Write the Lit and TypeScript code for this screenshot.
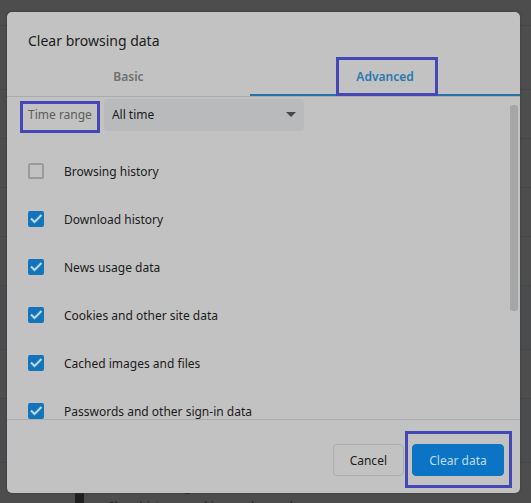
import { LitElement, html, css } from "lit";
import { customElement, state } from "lit/decorators.js";

interface DataItem {
  id: string;
  label: string;
  checked: boolean;
}

@customElement("app-root")
export class AppRoot extends LitElement {
  static styles = css`
    :host {
      display: block;
      position: relative;
      box-sizing: border-box;
      height: 100vh;
      min-height: 320px;
      padding: 12px 11px 10px 7px;
      overflow: hidden;
      background: #4d4d4d;
      color: #1c1c1c;
      font: 12px/20px "Noto Sans", "Open Sans", sans-serif;
    }
    * {
      box-sizing: border-box;
    }

    /* dimmed settings page under the dialog */
    .page {
      position: absolute;
      inset: 0;
      display: flex;
      flex-direction: column;
      background: #4d4d4d;
      overflow: hidden;
    }
    .line {
      flex: none;
      height: 49px;
      border-bottom: 1px solid #454647;
    }
    .line.short {
      height: 26px;
    }
    .line.tall {
      height: 64px;
    }
    .line.active {
      background: #4a4c4e;
    }
    .entry {
      position: absolute;
      left: 75px;
      bottom: -14px;
      display: flex;
      gap: 23px;
      color: #242424;
      font-size: 12px;
      line-height: 20px;
    }
    .entry-icon {
      width: 9px;
      background: #1f1f20;
    }
    .entry p {
      margin: 0;
    }

    .dialog {
      position: relative;
      display: flex;
      flex-direction: column;
      height: 100%;
      border-radius: 5px;
      background: #c2c2c2;
      box-shadow: 0 0 3px #3a3a3a;
    }
    h1 {
      margin: 0;
      padding: 17px 21px 0;
      font-size: 14px;
      font-weight: 400;
      line-height: 24px;
    }
    .tabs {
      display: grid;
      grid-template-columns: 9fr 10fr;
      height: 44px;
      border-bottom: 1px solid #a9abac;
    }
    .tab {
      display: flex;
      justify-content: center;
      align-items: flex-start;
      height: 43px;
      padding: 14px 0 0;
      border: 0;
      background: none;
      color: #6e7072;
      font: 600 12px/20px "Noto Sans", "Open Sans", sans-serif;
    }
    .tab.selected {
      border-bottom: 2px solid #2474a8;
      border-radius: 2px 0 0 0;
      color: #2878b0;
    }

    .marked {
      position: relative;
    }
    .marked::after {
      content: "";
      position: absolute;
      border: 3px solid #4547b5;
      pointer-events: none;
    }
    .tab .marked::after {
      inset: -10px -24px -9px -20px;
    }
    .range .marked::after {
      inset: -4px -8px -8px -8px;
    }
    .confirm.marked::after {
      inset: -14px -9px -13px -8px;
    }

    .body {
      position: relative;
      flex: 1;
      min-height: 0;
      padding: 2px 21px 0;
      overflow: hidden;
    }
    .range {
      display: flex;
      align-items: center;
      gap: 12px;
      margin-bottom: 16px;
    }
    .range label {
      color: #5c5d5e;
    }
    .select {
      position: relative;
      width: 200px;
    }
    select {
      appearance: none;
      display: block;
      width: 100%;
      height: 32px;
      padding: 0 8px;
      border: 0;
      border-radius: 4px;
      background: #b8babc;
      color: #1c1c1c;
      font: inherit;
    }
    .arrow {
      position: absolute;
      top: 13px;
      right: 8px;
      width: 10px;
      height: 5px;
      fill: #444648;
      pointer-events: none;
    }
    .item {
      display: flex;
      align-items: center;
      gap: 20px;
      height: 48px;
    }
    .name {
      padding-top: 2px;
    }
    .box {
      position: relative;
      width: 16px;
      height: 16px;
    }
    .box input {
      appearance: none;
      display: block;
      width: 16px;
      height: 16px;
      margin: 0;
      border: 2px solid #999b9c;
      border-radius: 2px;
    }
    .box input:checked {
      border: 0;
      background: #1374ba;
    }
    .tick {
      position: absolute;
      inset: 0;
      fill: none;
      stroke: #b9dcf2;
      stroke-width: 2;
      pointer-events: none;
    }
    .thumb {
      position: absolute;
      top: 8px;
      right: 2px;
      width: 8px;
      height: 64%;
      border-radius: 3px;
      background: #a5a6a6;
    }

    .actions {
      display: flex;
      justify-content: flex-end;
      gap: 8px;
      padding: 24px 16px 17px;
      border-top: 1px solid #aaacad;
    }
    .actions button {
      height: 32px;
      padding: 2px 16px 0;
      border: 1px solid #aaadb0;
      border-radius: 4px;
      background: none;
      color: #1c1c1c;
      font: inherit;
    }
    .actions .confirm {
      min-width: 92px;
      border-color: #0c74c4;
      background: #0c74c4;
      color: #bfdcf2;
    }
  `;

  @state() private items: DataItem[] = [
    { id: "browsing", label: "Browsing history", checked: false },
    { id: "download", label: "Download history", checked: true },
    { id: "news", label: "News usage data", checked: true },
    { id: "cookies", label: "Cookies and other site data", checked: true },
    { id: "cache", label: "Cached images and files", checked: true },
    { id: "passwords", label: "Passwords and other sign-in data", checked: true },
  ];

  private toggle(id: string) {
    this.items = this.items.map((i) => (i.id === id ? { ...i, checked: !i.checked } : i));
  }

  private renderItem(item: DataItem) {
    return html`<label class="item">
      <span class="box">
        <input type="checkbox" .checked=${item.checked} @change=${() => this.toggle(item.id)} />
        ${item.checked
          ? html`<svg class="tick" viewBox="0 0 16 16"><path d="M3 7.5 6.5 11 13.5 4" /></svg>`
          : ""}
      </span>
      <span class="name">${item.label}</span>
    </label>`;
  }

  render() {
    return html`
      <div class="page" aria-hidden="true">
        <div class="line short"></div>
        <div class="line tall"></div>
        <div class="line"></div>
        <div class="line"></div>
        <div class="line"></div>
        <div class="line"></div>
        <div class="line tall active"></div>
        <div class="line"></div>
        <div class="line tall active"></div>
        <div class="entry">
          <span class="entry-icon"></span>
          <div>
            <p>Clear browsing data</p>
            <p>Clear history, cookies, cache, and more</p>
          </div>
        </div>
      </div>
      <section class="dialog" role="dialog" aria-labelledby="title">
        <h1 id="title">Clear browsing data</h1>
        <div class="tabs" role="tablist">
          <button class="tab" role="tab" aria-selected="false"><span>Basic</span></button>
          <button class="tab selected" role="tab" aria-selected="true">
            <span class="marked">Advanced</span>
          </button>
        </div>
        <div class="body">
          <div class="range">
            <label class="marked" for="range">Time range</label>
            <div class="select">
              <select id="range">
                <option>All time</option>
              </select>
              <svg class="arrow" viewBox="0 0 10 5"><path d="M0 0H10L5 5Z" /></svg>
            </div>
          </div>
          ${this.items.map((i) => this.renderItem(i))}
          <div class="thumb"></div>
        </div>
        <footer class="actions">
          <button>Cancel</button>
          <button class="confirm marked">Clear data</button>
        </footer>
      </section>
    `;
  }
}
